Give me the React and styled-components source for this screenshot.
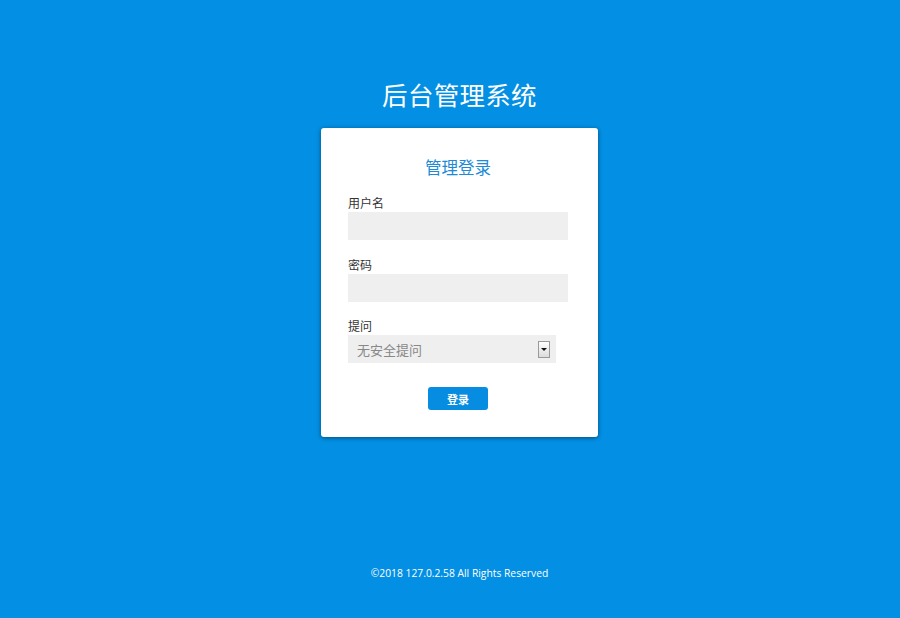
import React from 'react';
import styled, { createGlobalStyle } from 'styled-components';

const GlobalStyle = createGlobalStyle`
	html, body {
		margin: 0;
		padding: 0;
		background: #038fe3;
	}
	body {
		font-family: 'Noto Sans CJK SC', sans-serif;
	}
`;

const Page = styled.div`
	min-height: 100vh;
	display: flex;
	flex-direction: column;
	align-items: center;
	padding: 78px 0 0 19px;
	box-sizing: border-box;
`;

const SiteTitle = styled.h1`
	margin: 0 0 18px;
	color: #fff;
	font-size: 25.5px;
	line-height: 32px;
	font-weight: 400;
	letter-spacing: 0.3px;
`;

const Card = styled.form`
	width: 277px;
	box-sizing: border-box;
	background: #fff;
	border-radius: 3px;
	box-shadow: 0 1px 4px rgba(0, 0, 0, 0.45);
	padding: 28px 30px 27px 27px;
	display: flex;
	flex-direction: column;
`;

const CardTitle = styled.h2`
	margin: 0;
	text-align: center;
	color: #1e8ad6;
	font-size: 16.5px;
	line-height: 22px;
	font-weight: 400;
`;

const Field = styled.div`
	display: flex;
	flex-direction: column;
	gap: 1px;
	margin-top: ${p => p.$gap || '17px'};
	width: ${p => p.$width || '100%'};
`;

const Label = styled.label`
	color: #333;
	font-size: 12px;
	line-height: 16px;
`;

const Input = styled.input`
	height: 28px;
	box-sizing: border-box;
	border: none;
	outline: none;
	background: #efefef;
	padding: 0 9px;
	font-size: 13px;
	font-family: inherit;
`;

const SelectBox = styled.div`
	height: 28px;
	display: flex;
	align-items: center;
	background: #efefef;
	padding: 0 6px 0 9px;
`;

const Select = styled.select`
	flex: 1;
	appearance: none;
	border: none;
	outline: none;
	background: transparent;
	color: #888;
	font-size: 13px;
	font-family: inherit;
	padding: 0;
`;

const ArrowBox = styled.span`
	width: 10px;
	height: 15px;
	border: 1px solid #9a9a9a;
	background: linear-gradient(#ffffff, #dcdcdc);
	display: flex;
	align-items: center;
	justify-content: center;
	&::after {
		content: '';
		border-left: 3px solid transparent;
		border-right: 3px solid transparent;
		border-top: 3px solid #111;
	}
`;

const Actions = styled.div`
	display: flex;
	justify-content: center;
	margin-top: 24px;
`;

const Button = styled.button`
	width: 60px;
	height: 23px;
	border: none;
	border-radius: 3px;
	background: #068de2;
	color: #fff;
	font-size: 11px;
	font-weight: 700;
	font-family: inherit;
	padding: 0;
	cursor: pointer;
`;

const Footer = styled.footer`
	margin-top: 129px;
	color: #fff;
	font-family: 'Open Sans', sans-serif;
	font-size: 10.3px;
	line-height: 14px;
`;

const App = () => {
	return (
		<>
			<GlobalStyle />
			<Page>
				<SiteTitle>后台管理系统</SiteTitle>
				<Card onSubmit={e => e.preventDefault()}>
					<CardTitle>管理登录</CardTitle>
					<Field>
						<Label>用户名</Label>
						<Input type="text" />
					</Field>
					<Field>
						<Label>密码</Label>
						<Input type="password" />
					</Field>
					<Field $width="208px" $gap="16px">
						<Label>提问</Label>
						<SelectBox>
							<Select defaultValue="0">
								<option value="0">无安全提问</option>
							</Select>
							<ArrowBox />
						</SelectBox>
					</Field>
					<Actions>
						<Button type="submit">登录</Button>
					</Actions>
				</Card>
				<Footer>©2018 127.0.2.58 All Rights Reserved</Footer>
			</Page>
		</>
	);
};

export default App;
